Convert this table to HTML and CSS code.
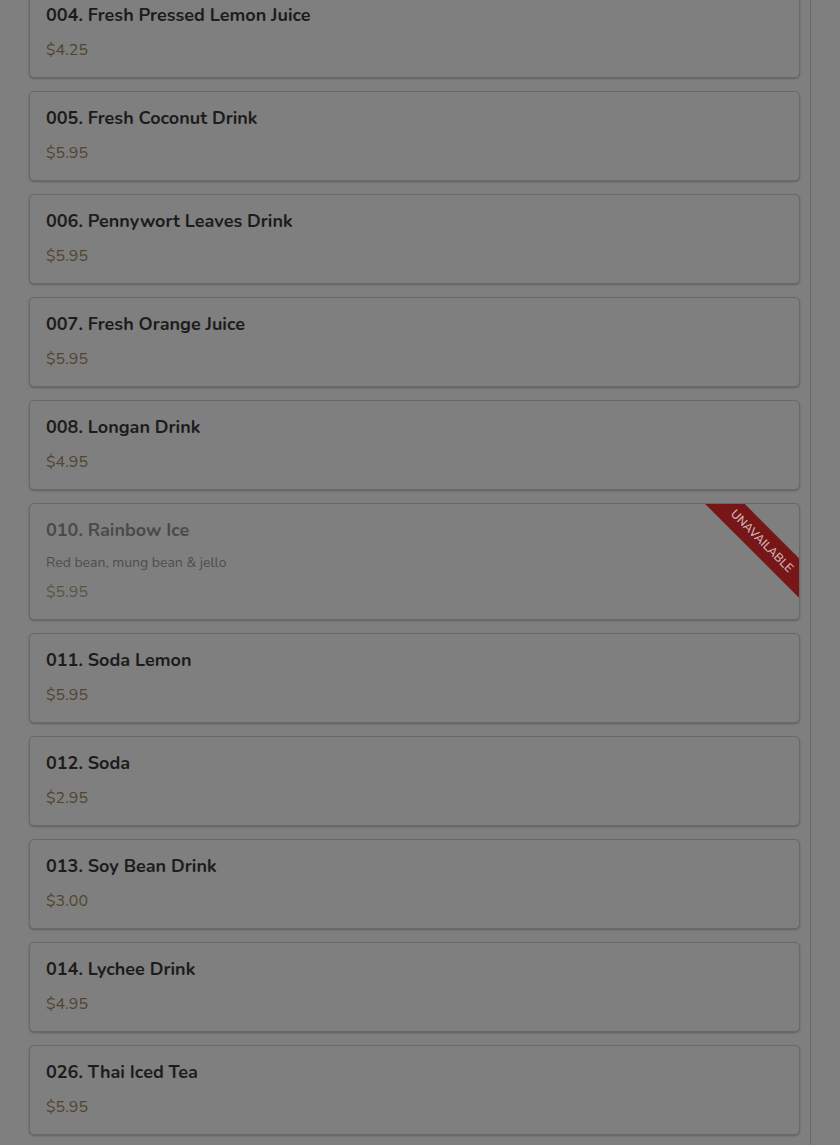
FILE: index.html
```html
<!DOCTYPE html>
<html lang="en">
<head>
    <meta charset="UTF-8">
    <meta name="viewport" content="width=device-width, initial-scale=1.0">
    <title>Drinks</title>
    <link rel="stylesheet" href="styles.css">
</head>
<body>
    <div class="menu">
        <div class="item-list">
            <div class="item">
                <h3>004. Fresh Pressed Lemon Juice</h3>
                <p class="price">$4.25</p>
            </div>
            <div class="item">
                <h3>005. Fresh Coconut Drink</h3>
                <p class="price">$5.95</p>
            </div>
            <div class="item">
                <h3>006. Pennywort Leaves Drink</h3>
                <p class="price">$5.95</p>
            </div>
            <div class="item">
                <h3>007. Fresh Orange Juice</h3>
                <p class="price">$5.95</p>
            </div>
            <div class="item">
                <h3>008. Longan Drink</h3>
                <p class="price">$4.95</p>
            </div>
            <div class="item unavailable">
                <h3>010. Rainbow Ice</h3>
                <p class="desc">Red bean, mung bean &amp; jello</p>
                <p class="price">$5.95</p>
                <span class="ribbon">Unavailable</span>
            </div>
            <div class="item">
                <h3>011. Soda Lemon</h3>
                <p class="price">$5.95</p>
            </div>
            <div class="item">
                <h3>012. Soda</h3>
                <p class="price">$2.95</p>
            </div>
            <div class="item">
                <h3>013. Soy Bean Drink</h3>
                <p class="price">$3.00</p>
            </div>
            <div class="item">
                <h3>014. Lychee Drink</h3>
                <p class="price">$4.95</p>
            </div>
            <div class="item">
                <h3>026. Thai Iced Tea</h3>
                <p class="price">$5.95</p>
            </div>
        </div>
    </div>
</body>
</html>
```

FILE: styles.css
```css
body {
    font-family: 'Nunito', 'Noto Sans', sans-serif;
    margin: 0;
    background-color: #7f7f7f;
    color: #1c1c1c;
    overflow: hidden;
}
.menu {
    width: 810px;
    border-right: 1px solid #6b6b6b;
    min-height: 1145px;
}
.item-list {
    display: flex;
    flex-direction: column;
    gap: 13px;
    margin-top: -12px;
    padding: 0 10px 20px 29px;
}
.item {
    position: relative;
    overflow: hidden;
    background-color: #7f7f7f;
    border: 1px solid #696969;
    border-radius: 5px;
    box-shadow: 0 1px 2px rgba(0,0,0,0.25);
    padding: 13px 16px 16px;
}
.item h3 {
    margin: 0 0 11px;
    font-size: 18px;
    font-weight: 700;
    line-height: 26px;
}
.price {
    margin: 0;
    font-size: 16px;
    line-height: 22px;
    color: #514530;
}
.desc {
    margin: 0 0 10px;
    font-size: 14px;
    line-height: 17px;
    color: #4d4d4d;
}
.unavailable h3 {
    color: #4a4a4a;
}
.unavailable .price {
    color: #5c5443;
}
.ribbon {
    position: absolute;
    top: 23px;
    right: -38px;
    width: 150px;
    height: 28px;
    line-height: 28px;
    text-align: center;
    transform: rotate(45deg);
    background-color: #761616;
    color: #cdb4b4;
    font-size: 12px;
    font-weight: 600;
    text-transform: uppercase;
}
```
